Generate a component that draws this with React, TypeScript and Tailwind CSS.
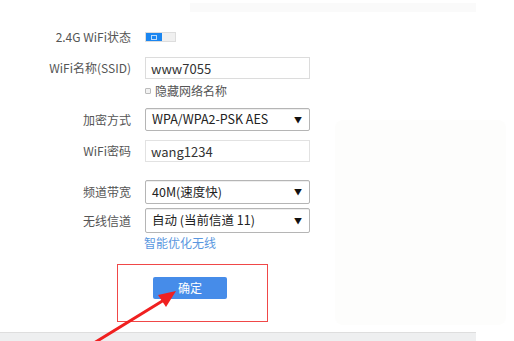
import React from "react";

const font = { fontFamily: '"Noto Sans CJK SC", "Noto Sans", sans-serif' };

function Label({ children }: { children: React.ReactNode }) {
  return (
    <div className="w-[131px] shrink-0 text-right text-[12px] text-[#555] leading-none">{children}</div>
  );
}

function Select({ value, h = "h-[23px]" }: { value: string; h?: string }) {
  return (
    <div className={`ml-[14px] w-[165px] ${h} border border-[#b5b5b5] rounded-[2px] bg-white flex items-center justify-between pl-[6px] pr-[7px] shadow-[inset_0_1px_0_#eee]`}>
      <span className="text-[12.5px] text-[#222] leading-none">{value}</span>
      <span className="text-[8px] text-[#111] leading-none">▼</span>
    </div>
  );
}

export default function App() {
  return (
    <div className="relative w-[514px] h-[341px] overflow-hidden bg-white" style={font}>
      {/* faint right panel */}
      <div className="absolute left-[335px] top-[120px] w-[171px] h-[205px] rounded-[8px] bg-[#fdfdfc]" />

      <div className="relative flex flex-col">
        <div className="mt-[3px] ml-[190px] w-[286px] h-[9px] bg-[#fafafa]" />

        {/* WiFi status */}
        <div className="mt-[20px] flex items-center h-[10px]">
          <Label>2.4G WiFi状态</Label>
          <div className="ml-[14px] flex h-[10px] w-[31px] border border-[#ddd]">
            <div className="w-[16px] h-full bg-[#1b86f0] flex items-center justify-center">
              <div className="w-[6px] h-[5px] border border-white/70" />
            </div>
            <div className="flex-1 bg-[#f0f0f0]" />
          </div>
        </div>

        {/* SSID */}
        <div className="mt-[15px] flex items-center h-[22px]">
          <Label>WiFi名称(SSID)</Label>
          <div className="ml-[14px] w-[165px] h-[22px] border border-[#dcdcdc] flex items-center pl-[5px]">
            <span className="text-[13px] text-[#333] leading-none">www7055</span>
          </div>
        </div>

        {/* hide */}
        <div className="mt-[5px] flex items-center h-[14px]">
          <div className="w-[145px] shrink-0" />
          <div className="w-[6px] h-[6px] border border-[#bbb] bg-[#f2f2f2] rounded-[1px]" />
          <span className="ml-[4px] text-[12px] text-[#555] leading-none">隐藏网络名称</span>
        </div>

        {/* encryption */}
        <div className="mt-[10px] flex items-center h-[23px]">
          <Label>加密方式</Label>
          <Select value="WPA/WPA2-PSK AES" />
        </div>

        {/* password */}
        <div className="mt-[9px] flex items-center h-[22px]">
          <Label>WiFi密码</Label>
          <div className="ml-[14px] w-[165px] h-[22px] border border-[#e2e2e2] flex items-center pl-[5px]">
            <span className="text-[13px] text-[#333] leading-none">wang1234</span>
          </div>
        </div>

        {/* bandwidth */}
        <div className="mt-[18px] flex items-center h-[24px]">
          <Label>频道带宽</Label>
          <Select value="40M(速度快)" h="h-[24px]" />
        </div>

        {/* channel */}
        <div className="mt-[4px] flex items-center h-[25px]">
          <Label>无线信道</Label>
          <Select value="自动 (当前信道 11)" h="h-[25px]" />
        </div>

        <div className="mt-[4px] ml-[144px] text-[12px] text-[#5a97e0] leading-none">智能优化无线</div>

        {/* confirm */}
        <div className="mt-[15px] ml-[117px] w-[151px] h-[58px] border border-[#f04848] flex pl-[35px] pt-[12px]">
          <div className="w-[74px] h-[22px] bg-[#468ce9] rounded-[2px] flex items-center justify-center">
            <span className="text-[12px] text-white leading-none">确定</span>
          </div>
        </div>

        {/* bottom bar */}
        <div className="mt-[10px] w-[476px] h-[12px] bg-[#eeeff0] border-t border-[#dedede]" />
      </div>

      {/* annotation arrow */}
      <svg className="absolute left-0 top-0" width="514" height="341" viewBox="0 0 514 341">
        <line x1="94" y1="343" x2="164" y2="300" stroke="#f02020" strokeWidth="3" strokeLinecap="round" />
        <polygon points="176,291 158,295 166,307" fill="#f02020" />
      </svg>
    </div>
  );
}
